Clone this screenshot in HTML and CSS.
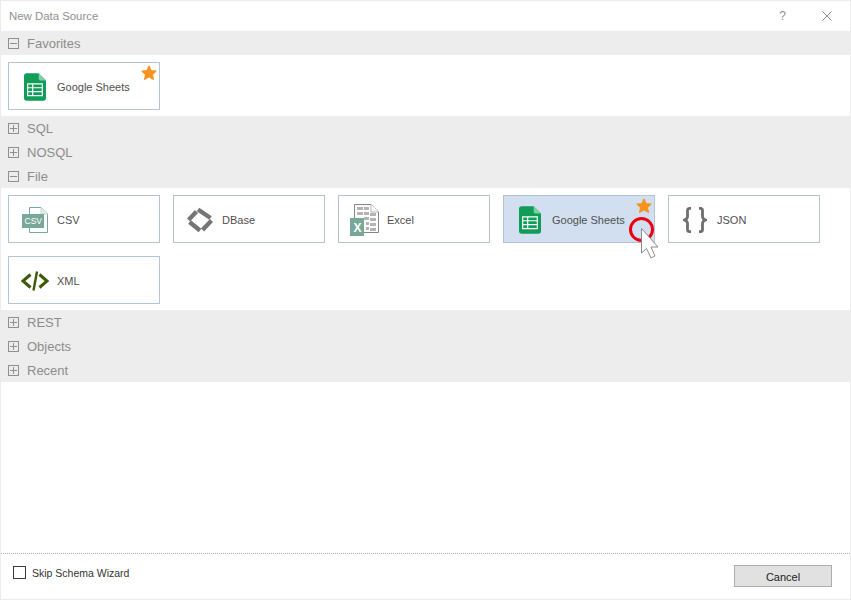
FILE: index.html
```html
<!DOCTYPE html>
<html lang="en">
<head>
<meta charset="utf-8">
<title>New Data Source</title>
<link rel="stylesheet" href="styles.css">
</head>
<body>
<svg class="sprites" width="0" height="0" aria-hidden="true">
  <defs>
    <symbol id="sheets" viewBox="0 0 24 30">
      <path d="M2 0H16L24 8V27a3 3 0 0 1-3 3H3a3 3 0 0 1-3-3V3a3 3 0 0 1 3-3Z" fill="#0f9d58"/>
      <path d="M16 0L24 8H18a2 2 0 0 1-2-2Z" fill="#7fcfa6"/>
      <path d="M4 11.500H20V24.500H4ZM4 15.800H20M4 20.100H20M9.500 11.500V24.500" fill="none" stroke="#fff" stroke-width="1.300"/>
    </symbol>
    <symbol id="star" viewBox="0 0 16 16">
      <path d="M8 1.200L10 5.800L14.800 6.300L11.200 9.500L12.300 14.200L8 11.700L3.700 14.200L4.800 9.500L1.200 6.300L6 5.800Z" fill="#f7931e" stroke="#f7931e" stroke-width="1.400" stroke-linejoin="round"/>
    </symbol>
  </defs>
</svg>
<div class="dialog">
  <header class="titlebar">
    <span class="title">New Data Source</span>
    <span class="help">?</span>
    <svg class="close" width="10" height="10" viewBox="0 0 10 10"><path d="M.5 .5L9.500 9.500M9.500 .5L.5 9.500" stroke="#8a8a8a" fill="none"/></svg>
  </header>

  <main class="groups">
    <div class="group-header"><span class="toggle minus"></span><span class="group-name">Favorites</span></div>
    <div class="cards">
      <button class="card">
        <span class="card-icon"><svg class="icon-sheets"><use href="#sheets"/></svg></span>
        <span class="card-label">Google Sheets</span>
        <svg class="star"><use href="#star"/></svg>
      </button>
    </div>

    <div class="group-header"><span class="toggle plus"></span><span class="group-name">SQL</span></div>
    <div class="group-header"><span class="toggle plus"></span><span class="group-name">NOSQL</span></div>
    <div class="group-header"><span class="toggle minus"></span><span class="group-name">File</span></div>
    <div class="cards">
      <button class="card">
        <span class="card-icon">
          <svg class="nudge" width="26" height="26" viewBox="0 0 26 26">
            <path d="M7.500 7V.5H19L25.500 7V25.500H7.500V21" fill="#fff" stroke="#7aa899"/>
            <path d="M19 .5V7H25.500" fill="#e4eeea" stroke="#c5d8d1"/>
            <rect x="0" y="7" width="22" height="14" fill="#78a898"/>
            <text x="2.500" y="17" class="csv-text">CSV</text>
          </svg>
        </span>
        <span class="card-label">CSV</span>
      </button>
      <button class="card">
        <span class="card-icon">
          <svg class="nudge" width="26" height="26" viewBox="0 0 26 26">
            <g fill="none" stroke="#757575" stroke-width="4.400">
              <path d="M1.500 13L9.500 4.500"/>
              <path d="M11 2.500L23.500 11"/>
              <path d="M24.500 13.500L15.500 23"/>
              <path d="M13 23.500L2.500 15"/>
            </g>
          </svg>
        </span>
        <span class="card-label">DBase</span>
      </button>
      <button class="card">
        <span class="card-icon">
          <svg class="nudge shift-left" width="29" height="32" viewBox="0 0 29 32">
            <path d="M4.500 14V.5H21L28.500 8V28.500H14" fill="#fff" stroke="#858585"/>
            <path d="M21 .5V8H28.500" fill="#fff" stroke="#b5b5b5"/>
            <g fill="#b4b4b4">
              <rect x="7" y="3" width="6" height="3"/><rect x="14" y="3" width="5" height="3"/>
              <rect x="7" y="8" width="6" height="3"/><rect x="14" y="8" width="5" height="3"/><rect x="20" y="9" width="6" height="3"/>
              <rect x="14" y="13" width="5" height="3"/><rect x="20" y="14" width="6" height="3"/>
              <rect x="16" y="18" width="3" height="3"/><rect x="20" y="19" width="6" height="3"/>
              <rect x="16" y="23" width="3" height="3"/><rect x="20" y="24" width="6" height="3"/>
            </g>
            <rect x="0" y="14" width="14" height="18" fill="#78a898"/>
            <text x="3.500" y="27.500" class="x-text">X</text>
          </svg>
        </span>
        <span class="card-label">Excel</span>
      </button>
      <button class="card active">
        <span class="card-icon"><svg class="icon-sheets"><use href="#sheets"/></svg></span>
        <span class="card-label">Google Sheets</span>
        <svg class="star"><use href="#star"/></svg>
      </button>
      <button class="card">
        <span class="card-icon">
          <svg class="nudge" width="24" height="26" viewBox="0 0 24 26">
            <g fill="none" stroke="#6f6f6f" stroke-width="2.800">
              <path d="M8 1.400H6.500Q4.500 1.400 4.500 3.500V9.500Q4.500 12 1.500 13Q4.500 14 4.500 16.500V22.500Q4.500 24.600 6.500 24.600H8"/>
              <path d="M16 1.400H17.500Q19.500 1.400 19.500 3.500V9.500Q19.500 12 22.500 13Q19.500 14 19.500 16.500V22.500Q19.500 24.600 17.500 24.600H16"/>
            </g>
          </svg>
        </span>
        <span class="card-label">JSON</span>
      </button>
      <button class="card">
        <span class="card-icon">
          <svg class="nudge" width="28" height="20" viewBox="0 0 28 20">
            <g fill="none" stroke="#3c5a0a" stroke-width="3">
              <path d="M9.500 3.500L2 10L9.500 16.500"/>
              <path d="M18.500 3.500L26 10L18.500 16.500"/>
              <path d="M16 .5L12.500 19.500" stroke-width="2.400"/>
            </g>
          </svg>
        </span>
        <span class="card-label">XML</span>
      </button>
    </div>

    <div class="group-header"><span class="toggle plus"></span><span class="group-name">REST</span></div>
    <div class="group-header"><span class="toggle plus"></span><span class="group-name">Objects</span></div>
    <div class="group-header"><span class="toggle plus"></span><span class="group-name">Recent</span></div>
  </main>

  <footer class="footer">
    <label class="skip"><span class="checkbox"></span><span class="skip-text">Skip Schema Wizard</span></label>
    <button class="cancel">Cancel</button>
  </footer>

  <svg class="pointer" width="34" height="46" viewBox="0 0 34 46" aria-hidden="true">
    <circle cx="14.500" cy="14.500" r="11" fill="none" stroke="#ea0010" stroke-width="3"/>
    <path d="M14.500 13.500V38L19.500 33.500L24 43L28 41L24 32H31Z" fill="#fff" stroke="#8c8c8c" stroke-width="1"/>
  </svg>
</div>
</body>
</html>
```

FILE: styles.css
```css
* { box-sizing: border-box; }

html, body { margin: 0; padding: 0; }

body {
  width: 851px;
  height: 600px;
  overflow: hidden;
  background: #fff;
  font-family: "Liberation Sans", Arial, sans-serif;
}

.sprites { position: absolute; }

.dialog {
  position: relative;
  width: 851px;
  height: 600px;
  display: flex;
  flex-direction: column;
  border: 1px solid #ececec;
  background: #fff;
}

.titlebar {
  height: 30px;
  flex: none;
  display: flex;
  align-items: center;
  padding: 0 18px 0 8px;
  font-size: 11.400px;
  color: #8f8f8f;
}

.title { flex: 1; }

.help {
  font-size: 12px;
  color: #909090;
  margin-right: 36px;
}

.groups { flex: 1; }

.group-header {
  height: 24px;
  display: flex;
  align-items: center;
  gap: 8px;
  padding-left: 7px;
  background: #ededed;
  font-size: 13px;
  color: #8c8c8c;
}

.group-name { padding-top: 1px; }

.toggle {
  position: relative;
  width: 11px;
  height: 11px;
  flex: none;
  border: 1px solid #8f8f8f;
}

.toggle::before {
  content: "";
  position: absolute;
  left: 1px;
  right: 1px;
  top: 4px;
  height: 1px;
  background: #8f8f8f;
}

.plus::after {
  content: "";
  position: absolute;
  top: 1px;
  bottom: 1px;
  left: 4px;
  width: 1px;
  background: #8f8f8f;
}

.cards {
  display: flex;
  flex-wrap: wrap;
  column-gap: 13px;
  row-gap: 13px;
  padding: 7px 7px 6px;
}

.card {
  position: relative;
  width: 152px;
  height: 48px;
  display: flex;
  align-items: center;
  padding: 0;
  border: 1px solid #b4c4d2;
  background: #fff;
  font: inherit;
  text-align: left;
}

.card.active { background: #d2dff0; }

.card-icon {
  width: 48px;
  flex: none;
  display: flex;
  justify-content: center;
  align-items: center;
  padding-left: 4px;
}

.icon-sheets { width: 22px; height: 28px; margin-top: 2px; }

.nudge { margin-top: 2px; }

.shift-left { margin-left: -2px; }

.card-label {
  font-size: 11px;
  color: #4f4f4f;
  padding-top: 2px;
}

.star {
  position: absolute;
  top: 2px;
  right: 2px;
  width: 16px;
  height: 16px;
}

.csv-text {
  font-family: "Liberation Sans", Arial, sans-serif;
  font-size: 8.500px;
  fill: #fff;
}

.x-text {
  font-family: "Liberation Sans", Arial, sans-serif;
  font-size: 12px;
  font-weight: bold;
  fill: #fff;
}

.footer {
  height: 46px;
  flex: none;
  display: flex;
  align-items: center;
  justify-content: space-between;
  padding: 0 18px 3px 12px;
  border-top: 1px dotted #b0b0b0;
}

.skip {
  display: flex;
  align-items: center;
  gap: 6px;
  font-size: 10.500px;
  color: #333;
  margin-top: -6px;
}

.skip-text { padding-top: 1px; }

.checkbox {
  width: 13px;
  height: 13px;
  border: 1px solid #3c3c3c;
  background: #fff;
}

.cancel {
  width: 98px;
  height: 22px;
  margin-top: 2px;
  padding: 2px 0 0;
  border: 1px solid #adadad;
  background: #e1e1e1;
  font: 11px "Liberation Sans", Arial, sans-serif;
  color: #222;
}

.pointer {
  position: absolute;
  left: 626px;
  top: 214px;
}
```
